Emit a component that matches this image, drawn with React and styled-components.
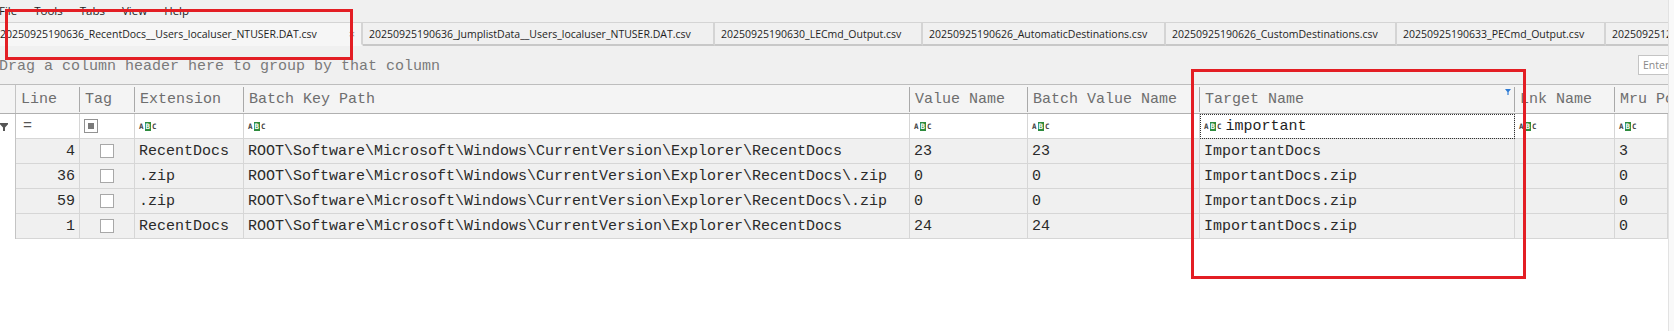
import React from 'react';
import styled, { createGlobalStyle } from 'styled-components';

const GlobalStyle = createGlobalStyle`
  html, body { margin: 0; padding: 0; background: #f0f0f0; }
  body { font-family: "Open Sans", "Liberation Sans", sans-serif; }
  * { box-sizing: border-box; }
`;

const Window = styled.div`
  position: relative;
  width: 1674px;
  height: 331px;
  overflow: hidden;
  display: flex;
  background: #f0f0f0;
`;

const Main = styled.div`
  flex: 1;
  min-width: 0;
  display: flex;
  flex-direction: column;
  overflow: hidden;
`;

const EdgeStrip = styled.div`
  flex: none;
  width: 6px;
  background: #f9f9f9;
  border-left: 1px solid #e2e2e2;
`;

const MenuBar = styled.div`
  height: 22px;
  display: flex;
  align-items: center;
  gap: 17px;
  margin-left: -1px;
  padding-bottom: 2px;
  font-size: 11.5px;
  color: #1e1e1e;
`;

const MenuItem = styled.span`
  white-space: nowrap;
`;

const TabStrip = styled.div`
  height: 24px;
  display: flex;
  margin-left: -6px;
  border-top: 1px solid #d4d4d4;
`;

const Tab = styled.div`
  flex: none;
  width: ${p => p.$w}px;
  height: 23px;
  display: flex;
  align-items: center;
  padding-left: 6px;
  padding-right: 6px;
  font-size: 10.5px;
  color: #1e1e1e;
  white-space: nowrap;
  overflow: hidden;
  background: ${p => (p.$active ? '#f6f6f6' : '#f0f0f0')};
  border-right: 2px solid #d4d4d4;
  border-bottom: 2px solid ${p => (p.$active ? 'transparent' : '#c8c8c8')};
`;

const TabLabel = styled.span`
  flex: 1;
  overflow: hidden;
`;

const TabClose = styled.span`
  flex: none;
  font-size: 11px;
  color: #8a8a8a;
`;

const GroupPanel = styled.div`
  height: 38px;
  display: flex;
  align-items: flex-start;
`;

const GroupText = styled.span`
  margin-top: 11px;
  margin-left: -1px;
  line-height: 20px;
  font-family: "Liberation Mono", monospace;
  font-size: 15px;
  color: #7a7a7a;
  white-space: nowrap;
`;

const SearchBox = styled.div`
  flex: none;
  margin-left: auto;
  margin-right: -30px;
  margin-top: 9px;
  width: 60px;
  height: 20px;
  background: #fff;
  border: 1px solid #c4c4c4;
  padding-left: 4px;
  display: flex;
  align-items: center;
  font-size: 10.5px;
  color: #8a8a8a;
  white-space: nowrap;
  overflow: hidden;
`;

const Grid = styled.div`
  flex: 1;
  background: #fff;
  border-top: 1px solid #bdbdbd;
  font-family: "Liberation Mono", monospace;
  font-size: 15px;
`;

const Row = styled.div`
  display: flex;
  height: ${p => p.$h}px;
  background: ${p => p.$bg};
  border-bottom: ${p => (p.$header ? '1px solid #b0b0b0' : 'none')};
`;

const HeaderCell = styled.div`
  position: relative;
  flex: ${p => (p.$w ? 'none' : '1')};
  width: ${p => (p.$w ? `${p.$w}px` : 'auto')};
  min-width: 0;
  display: flex;
  align-items: center;
  padding-left: 5px;
  color: #6e6e6e;
  white-space: nowrap;
  overflow: hidden;
  &::after {
    content: '';
    position: absolute;
    right: 0;
    top: 2px;
    bottom: 1px;
    width: 1px;
    background: #a9a9a9;
    display: ${p => (p.$w ? 'block' : 'none')};
  }
`;

const IndicatorCell = styled.div`
  flex: none;
  width: 16px;
  display: flex;
  align-items: center;
  background: ${p => p.$bg || '#fff'};
  border-right: 1px solid #c4c4c4;
`;

const Cell = styled.div`
  position: relative;
  flex: ${p => (p.$w ? 'none' : '1')};
  width: ${p => (p.$w ? `${p.$w}px` : 'auto')};
  min-width: 0;
  display: flex;
  align-items: center;
  justify-content: ${p => (p.$align === 'right' ? 'flex-end' : p.$align === 'center' ? 'center' : 'flex-start')};
  padding: 0 4px;
  color: #2a2a2a;
  white-space: nowrap;
  overflow: hidden;
  border-right: 1px solid #d6d6d6;
  border-bottom: 1px solid #d6d6d6;
  outline: ${p => (p.$focused ? '1px dotted #333' : 'none')};
  outline-offset: -1px;
`;

const FilterGlyph = styled.span`
  color: #555;
  padding-left: 3px;
`;

const CheckBox = styled.span`
  width: 14px;
  height: 14px;
  background: #fff;
  border: 1px solid ${p => (p.$mixed ? '#939393' : '#a8a8a8')};
  display: flex;
  align-items: center;
  justify-content: center;
  &::before {
    content: '';
    width: 6px;
    height: 6px;
    background: #7a7a7a;
    display: ${p => (p.$mixed ? 'block' : 'none')};
  }
`;

const Abc = styled.span`
  display: inline-flex;
  align-items: center;
  height: 9px;
  font-family: "DejaVu Sans Mono", monospace;
  font-weight: bold;
  font-size: 7.5px;
  line-height: 9px;
  color: #444;
  flex: none;
`;

const AbcBox = styled.span`
  display: inline-flex;
  align-items: center;
  height: 9px;
  padding: 0 1px;
  margin: 0 1px;
  background: #2e8b3e;
  color: #fff;
`;

const FilterValue = styled.span`
  margin-left: 4px;
  color: #1e1e1e;
`;

const SortMark = styled.svg`
  position: absolute;
  right: 4px;
  top: 4px;
`;

const Annotation = styled.div`
  position: absolute;
  left: ${p => p.$x}px;
  top: ${p => p.$y}px;
  width: ${p => p.$w}px;
  height: ${p => p.$h}px;
  border: 3px solid #e31e24;
  pointer-events: none;
`;

const AbcIcon = () => (
  <Abc>
    A<AbcBox>B</AbcBox>C
  </Abc>
);

const Funnel = () => (
  <svg width="8" height="8" viewBox="0 0 8 8">
    <path d="M0 0H8V1.2L5 4.4V8H3V4.4L0 1.2Z" fill="#555" />
  </svg>
);

const columns = [
  { key: 'line', title: 'Line', w: 64, align: 'right' },
  { key: 'tag', title: 'Tag', w: 55, align: 'center' },
  { key: 'ext', title: 'Extension', w: 109 },
  { key: 'bkp', title: 'Batch Key Path', w: 666 },
  { key: 'vn', title: 'Value Name', w: 118 },
  { key: 'bvn', title: 'Batch Value Name', w: 172 },
  { key: 'tn', title: 'Target Name', w: 315 },
  { key: 'lnk', title: 'Lnk Name', w: 100 },
  { key: 'mru', title: 'Mru Position', w: 0 },
];

const base = 'ROOT\\Software\\Microsoft\\Windows\\CurrentVersion\\Explorer\\RecentDocs';

const rows = [
  { line: '4', ext: 'RecentDocs', bkp: base, vn: '23', bvn: '23', tn: 'ImportantDocs', lnk: '', mru: '3' },
  { line: '36', ext: '.zip', bkp: base + '\\.zip', vn: '0', bvn: '0', tn: 'ImportantDocs.zip', lnk: '', mru: '0' },
  { line: '59', ext: '.zip', bkp: base + '\\.zip', vn: '0', bvn: '0', tn: 'ImportantDocs.zip', lnk: '', mru: '0' },
  { line: '1', ext: 'RecentDocs', bkp: base, vn: '24', bvn: '24', tn: 'ImportantDocs.zip', lnk: '', mru: '0' },
];

const tabs = [
  { label: '20250925190636_RecentDocs__Users_localuser_NTUSER.DAT.csv', w: 369, active: true },
  { label: '20250925190636_JumplistData__Users_localuser_NTUSER.DAT.csv', w: 352 },
  { label: '20250925190630_LECmd_Output.csv', w: 208 },
  { label: '20250925190626_AutomaticDestinations.csv', w: 243 },
  { label: '20250925190626_CustomDestinations.csv', w: 231 },
  { label: '20250925190633_PECmd_Output.csv', w: 209 },
  { label: '20250925125014_SBECmd_Output.csv', w: 220 },
];

const filterContent = (col) => {
  if (col.key === 'line') return <FilterGlyph>=</FilterGlyph>;
  if (col.key === 'tag') return <CheckBox $mixed />;
  if (col.key === 'tn')
    return (
      <>
        <AbcIcon />
        <FilterValue>important</FilterValue>
      </>
    );
  return <AbcIcon />;
};

export default function App() {
  return (
    <>
      <GlobalStyle />
      <Window>
        <Main>
          <MenuBar>
            {['File', 'Tools', 'Tabs', 'View', 'Help'].map(m => (
              <MenuItem key={m}>{m}</MenuItem>
            ))}
          </MenuBar>
          <TabStrip>
            {tabs.map(t => (
              <Tab key={t.label} $w={t.w} $active={t.active}>
                <TabLabel>{t.label}</TabLabel>
                {t.active && <TabClose>×</TabClose>}
              </Tab>
            ))}
          </TabStrip>
          <GroupPanel>
            <GroupText>Drag a column header here to group by that column</GroupText>
            <SearchBox>Enter text to search...</SearchBox>
          </GroupPanel>
          <Grid>
            <Row $h={29} $bg="#f4f4f4" $header>
              <IndicatorCell $bg="#f4f4f4" />
              {columns.map(c => (
                <HeaderCell key={c.key} $w={c.w}>
                  {c.title}
                  {c.key === 'tn' && (
                    <SortMark width="6" height="6" viewBox="0 0 6 6">
                      <path d="M0 0H6L3.6 3V6H2.4V3Z" fill="#2d7bd4" />
                    </SortMark>
                  )}
                </HeaderCell>
              ))}
            </Row>
            <Row $h={25} $bg="#fff">
              <IndicatorCell>
                <Funnel />
              </IndicatorCell>
              {columns.map(c => (
                <Cell key={c.key} $w={c.w} $focused={c.key === 'tn'}>
                  {filterContent(c)}
                </Cell>
              ))}
            </Row>
            {rows.map((r, i) => (
              <Row key={i} $h={25} $bg="#f0f0f0">
                <IndicatorCell />
                {columns.map(c => (
                  <Cell key={c.key} $w={c.w} $align={c.align}>
                    {c.key === 'tag' ? <CheckBox /> : r[c.key]}
                  </Cell>
                ))}
              </Row>
            ))}
          </Grid>
        </Main>
        <EdgeStrip />
        <Annotation $x={5} $y={9} $w={348} $h={51} />
        <Annotation $x={1191} $y={69} $w={335} $h={210} />
      </Window>
    </>
  );
}
